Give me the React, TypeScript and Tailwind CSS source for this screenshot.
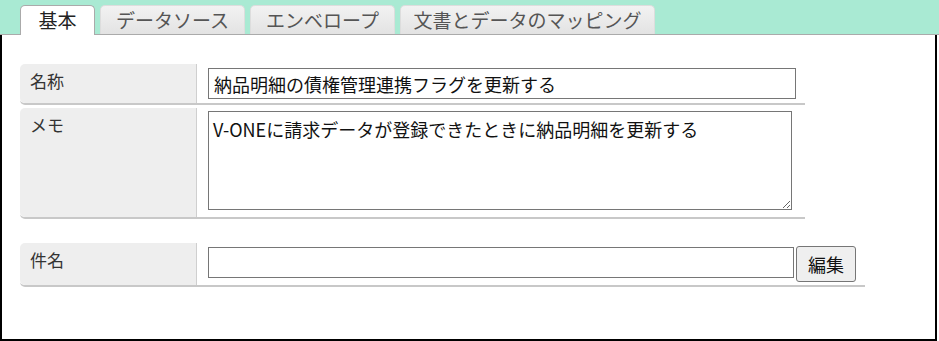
import React from 'react';

const font = { fontFamily: '"Noto Sans CJK JP", "Noto Sans", sans-serif' };

const tabs = [
  { label: '基本', w: 'w-[75px]', active: true },
  { label: 'データソース', w: 'w-[145px]', active: false },
  { label: 'エンベロープ', w: 'w-[145px]', active: false },
  { label: '文書とデータのマッピング', w: 'w-[255px]', active: false },
];

const Label: React.FC<{ text: string }> = ({ text }) => (
  <div className="w-[177px] shrink-0 bg-[#eeeeee] border-r border-[#cfcfcf] rounded-l-[5px] pl-[10px] pt-[5px] text-[17px] leading-[24px] text-[#333]">
    {text}
  </div>
);

export default function App() {
  return (
    <div className="w-[939px] h-[341px] bg-white flex flex-col" style={font}>
      <div className="h-[35px] bg-[#a9ead3] border-b border-[#aaaaaa] flex items-end gap-[5px] pl-[20px] shrink-0">
        {tabs.map((t) =>
          t.active ? (
            <div
              key={t.label}
              className={`${t.w} h-[30px] -mb-px bg-white border border-b-0 border-[#aaaaaa] rounded-t-[5px] flex items-center justify-center text-[19px] text-[#222]`}
            >
              {t.label}
            </div>
          ) : (
            <div
              key={t.label}
              className={`${t.w} h-[29px] bg-gradient-to-b from-[#f2f2f2] to-[#e3e3e3] border border-b-0 border-[#dddddd] rounded-t-[5px] flex items-center justify-center text-[19px] text-[#555]`}
            >
              {t.label}
            </div>
          )
        )}
      </div>
      <div className="w-[937px] flex-1 border-2 border-t-0 border-black pt-[29px] pl-[18px]">
        <div className="w-[785px] flex flex-col gap-[3px]">
          <div className="flex border-b-2 border-[#c8c8c8] rounded-l-[5px]">
            <Label text="名称" />
            <div className="flex-1 pl-[11px] pt-[4px] pb-[4px]">
              <input
                className="w-[588px] h-[31px] border border-[#767676] px-[5px] text-[18px] text-[#111] outline-none"
                style={font}
                defaultValue="納品明細の債権管理連携フラグを更新する"
              />
            </div>
          </div>
          <div className="flex border-b-2 border-[#c8c8c8] rounded-l-[5px]">
            <Label text="メモ" />
            <div className="flex-1 pl-[11px] pt-[3px] pb-[7px]">
              <textarea
                className="block w-[584px] h-[99px] border border-[#767676] px-[4px] pt-[5px] text-[18px] leading-[24px] text-[#111] outline-none resize"
                style={font}
                defaultValue="V-ONEに請求データが登録できたときに納品明細を更新する"
              />
            </div>
          </div>
        </div>
        <div className="w-[845px] mt-[24px] flex border-b-2 border-[#c8c8c8] rounded-l-[5px]">
          <Label text="件名" />
          <div className="flex-1 pl-[11px] pt-[3px] pb-[3px] flex items-start gap-[2px]">
            <input
              className="w-[586px] h-[31px] mt-[1px] border border-[#767676] px-[5px] text-[18px] outline-none"
              style={font}
            />
            <button
              className="w-[60px] h-[36px] bg-[#efefef] border border-[#767676] rounded-[3px] text-[18px] text-[#111]"
              style={font}
            >
              編集
            </button>
          </div>
        </div>
      </div>
    </div>
  );
}
